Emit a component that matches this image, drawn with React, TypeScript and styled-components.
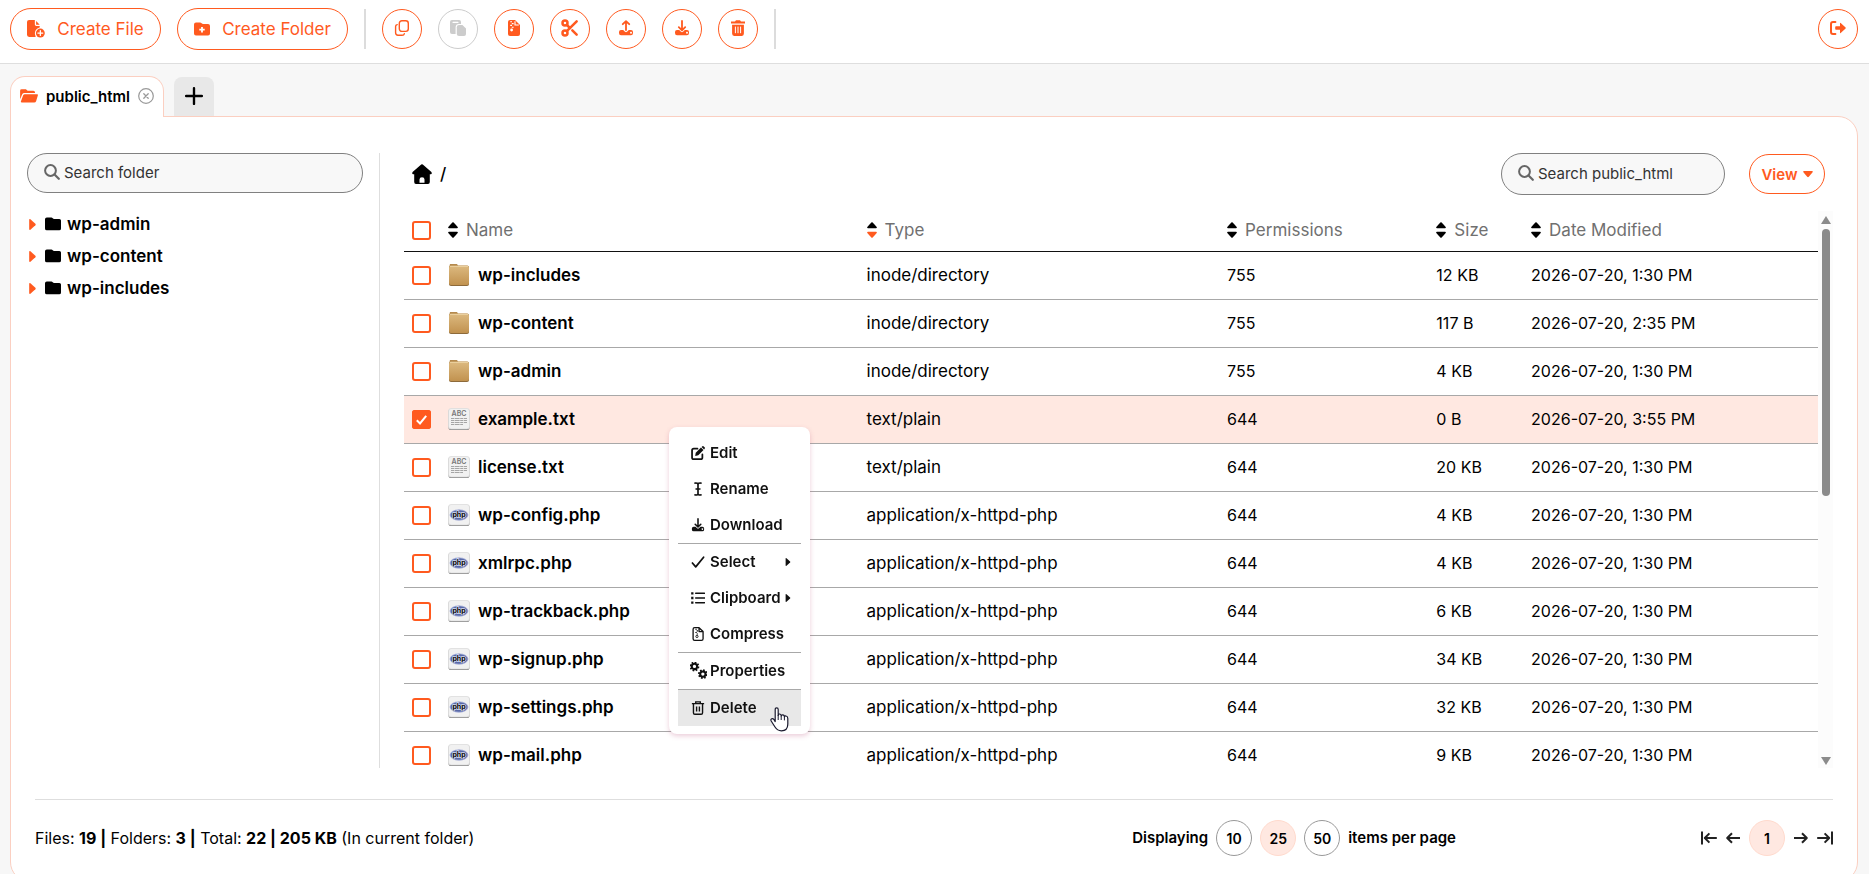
import React, { useState } from "react";
import styled, { createGlobalStyle, css } from "styled-components";
import { Scissors } from "lucide-react";

const accent = "#ff5a1f";
const accentSoft = "#ffe8e1";
const accentLine = "#fbcfc1";

const GlobalStyle = createGlobalStyle`
  *, *::before, *::after { box-sizing: border-box; }
  html, body, #root { height: 100%; }
  body {
    margin: 0;
    overflow: hidden;
    background: #f7f7f7;
    color: #000;
    font-family: Inter, "Liberation Sans", sans-serif;
    font-size: 16px;
  }
  button, input { font-family: inherit; }
  button { cursor: pointer; padding: 0; }
`;

/* ---------- icons ---------- */

const Svg = styled.svg`
  display: block;
  flex: none;
  fill: none;
  stroke: none;
`;

type IconProps = { size?: number };

const icon =
  (children: React.ReactNode, box = "0 0 16 16") =>
  ({ size = 16 }: IconProps) => (
    <Svg width={size} height={size} viewBox={box} aria-hidden="true">
      {children}
    </Svg>
  );

const CreateFileIcon = icon(
  <>
    <path
      fill="currentColor"
      d="M2 0H7.4V4.2Q7.4 5.6 8.8 5.6H12V7.2A5.4 5.4 0 0 0 8.4 15.6Q8 16 7.4 16H2Q0 16 0 14V2Q0 0 2 0ZM8.6 1 12 4.4H8.6Z"
    />
    <circle cx="12.6" cy="12.3" r="4.2" fill="currentColor" />
    <path d="M12.6 10v4.6M10.3 12.3h4.6" stroke="#fff" strokeWidth="1.2" strokeLinecap="round" />
  </>,
  "0 0 17 17",
);

const CreateFolderIcon = icon(
  <>
    <path fill="currentColor" d="M2 1.5H6Q7 1.5 7.6 2.2Q8.2 3 9.2 3H14Q16 3 16 5V12.6Q16 14.6 14 14.6H2Q0 14.6 0 12.6V3.5Q0 1.5 2 1.5Z" />
    <path d="M8 6v5.4M5.3 8.7h5.4" stroke="#fff" strokeWidth="1.8" />
  </>,
);

const CopyIcon = icon(
  <g stroke="currentColor" strokeWidth="1.4" strokeLinecap="round">
    <rect x="5.3" y="0.8" width="9" height="10.6" rx="2.6" />
    <path d="M3.2 4.6Q1.6 4.8 1.6 6.6V12.8Q1.6 15.2 4 15.2H8Q10 15.2 10.3 13.8" />
  </g>,
);

const PasteIcon = icon(
  <>
    <path fill="currentColor" d="M2 0H9Q11 0 11 2V4H9Q5.6 4 5.6 7.4V14H2Q0 14 0 12V2Q0 0 2 0Z" />
    <path d="M3 2.3h5" stroke="#fff" strokeWidth="1.2" strokeLinecap="round" />
    <path fill="currentColor" d="M9 5H12.4L16 8.6V14Q16 16 14 16H9Q6.8 16 6.8 14V7.2Q6.8 5 9 5Z" />
  </>,
);

const ZipIcon = icon(
  <>
    <path fill="currentColor" d="M4 0H9L14 5V14Q14 16 12 16H4Q2 16 2 14V2Q2 0 4 0Z" />
    <path stroke="#fff" strokeWidth="1.1" d="M4.2 1.8h1.8M5.8 3.6h1.8M4.2 5.4h1.8M5.8 7.2h1.8M9 1.2V5H12.8" />
    <circle cx="5.6" cy="10" r="1.4" fill="#fff" />
  </>,
);

const Tray = () => (
  <path
    fill="currentColor"
    fillRule="evenodd"
    d="M3 10H5.2L7 11.8Q8 12.6 9 11.8L10.8 10H13Q15 10 15 12V13Q15 15.2 13 15.2H3Q1 15.2 1 13V12Q1 10 3 10ZM13 11.8a.9.9 0 1 0 .01 0Z"
  />
);

const UploadIcon = icon(
  <>
    <path stroke="currentColor" strokeWidth="1.8" strokeLinecap="round" strokeLinejoin="round" d="M8 10V1.2M4.8 4.2 8 1.1l3.2 3.1" />
    <Tray />
  </>,
);

const DownloadIcon = icon(
  <>
    <path stroke="currentColor" strokeWidth="1.8" strokeLinecap="round" strokeLinejoin="round" d="M8 1v9M4.8 7.2 8 10.3l3.2-3.1" />
    <Tray />
  </>,
);

const TrashIcon = icon(
  <>
    <path fill="currentColor" d="M1 1.6H5L6 .2H10L11 1.6H15V3.4H1ZM2.1 4.8H13.9V13.6Q13.9 16 11.9 16H4.1Q2.1 16 2.1 13.6Z" />
    <path d="M5.4 6.6v6.6M8 6.6v6.6M10.6 6.6v6.6" stroke="#fff" strokeWidth="1" />
  </>,
);

const TrashOutlineIcon = icon(
  <path
    stroke="currentColor"
    strokeWidth="1.6"
    d="M1 3H15M5.4 2.6V1H10.6V2.6M2.8 3.6V13.4Q2.8 15.2 4.4 15.2H11.6Q13.2 15.2 13.2 13.4V3.6M6.4 6.4v5.6M9.6 6.4v5.6"
  />,
);

const LogoutIcon = icon(
  <>
    <path stroke="currentColor" strokeWidth="2" strokeLinecap="round" d="M5.4 2H3Q1 2 1 4V12Q1 14 3 14H5.4" />
    <path fill="currentColor" d="M6 6.2H10V3.2Q10 2.4 10.7 3L15.6 7.5Q16 8 15.6 8.5L10.7 13Q10 13.6 10 12.8V9.8H6Q5.2 9.8 5.2 9V7Q5.2 6.2 6 6.2Z" />
  </>,
);

const OpenFolderIcon = icon(
  <path
    fill="currentColor"
    d="M1.6 1.6H5.6L7.2 3H12.6Q14.2 3 14.2 4.6V5.2H4.2Q2.6 5.2 2 6.6L.1 11V3Q.1 1.6 1.6 1.6ZM4.6 6.3H16.2Q17.2 6.3 16.9 7.3L15.2 12.9Q14.8 14.2 13.4 14.2H1.8Q.4 14.2.9 12.9L3 7.4Q3.4 6.3 4.6 6.3Z"
  />,
  "0 0 17 16",
);

const CloseIcon = icon(
  <g stroke="currentColor" strokeLinecap="round">
    <circle cx="8" cy="8" r="7.3" strokeWidth="1.2" />
    <path strokeWidth="1.3" d="M5.8 5.8l4.4 4.4M10.2 5.8l-4.4 4.4" />
  </g>,
);

const PlusIcon = icon(<path stroke="currentColor" strokeWidth="2.1" strokeLinecap="round" d="M8 1v14M1 8h14" />);

const SearchIcon = icon(
  <g stroke="currentColor" strokeLinecap="round">
    <circle cx="6.5" cy="6.5" r="5.4" strokeWidth="2" />
    <path strokeWidth="2.2" d="M10.8 10.8 14.8 14.8" />
  </g>,
);

const FolderIcon = icon(
  <path fill="currentColor" d="M1.8 1.5H6.4Q7.2 1.5 7.7 2.2Q8.2 3 9.2 3H14.4Q16 3 16 4.6V12.4Q16 14.3 14.2 14.3H1.8Q0 14.3 0 12.4V3.3Q0 1.5 1.8 1.5Z" />,
);

const HomeIcon = icon(
  <path
    fill="currentColor"
    d="M9.2.5Q10 -.1 10.8.5L19.4 8Q20.4 9.8 18.8 10.3H17.8V18Q17.8 20 16 20H12.5V15.5Q12.5 13.2 10 13.2Q7.5 13.2 7.5 15.5V20H4Q2.2 20 2.2 18V10.3H1.2Q-.4 9.8.6 8Z M7 18.8H13V20H7Z"
  />,
  "0 0 20 20",
);

const CaretDown = icon(<path fill="currentColor" d="M1 2H9Q10.4 2.2 9.4 3.5L5.8 7.8Q5 8.6 4.2 7.8L.6 3.5Q-.4 2.2 1 2Z" />, "0 0 10 10");
const CaretRight = icon(<path fill="currentColor" d="M2 .8Q2-.3 3.1.3L7.6 4.4Q8.2 5 7.6 5.6L3.1 9.7Q2 10.3 2 9.2Z" />, "0 0 10 10");

const EditIcon = icon(
  <>
    <path stroke="currentColor" strokeWidth="2" strokeLinecap="round" d="M7.4 3H3.2Q1.2 3 1.2 5V13Q1.2 15 3.2 15H11Q13 15 13 13V9.6" />
    <path fill="currentColor" d="M11.4 1.7 14.3 4.6 8.3 10.6 4.8 11.3 5.4 7.7ZM12.1 1 13 .3Q13.8-.3 14.6.5L15.5 1.4Q16.3 2.2 15.6 3L15 3.9Z" />
  </>,
);

const RenameIcon = icon(
  <path stroke="currentColor" strokeWidth="1.9" strokeLinecap="round" d="M4.6 1.2Q8 .8 8 3V13Q8 15.2 4.6 14.8M11.4 1.2Q8 .8 8 3M8 13Q8 15.2 11.4 14.8M5.8 8H10.2" />,
);

const CheckIcon = icon(<path stroke="currentColor" strokeWidth="2" strokeLinecap="round" strokeLinejoin="round" d="M1.6 9.2 5.4 13.6 14.4 2.6" />);

const ListIcon = icon(
  <>
    <path stroke="currentColor" strokeWidth="1.8" strokeLinecap="round" d="M5.4 2.6h10M5.4 8h10M5.4 13.4h10" />
    <path fill="currentColor" d="M.2 1.3h2.6v2.6H.2ZM.2 6.7h2.6v2.6H.2ZM.2 12.1h2.6v2.6H.2Z" />
  </>,
);

const CompressIcon = icon(
  <>
    <path stroke="currentColor" strokeWidth="1.5" strokeLinejoin="round" d="M4.2.8H9.2L13.8 5.2V13.4Q13.8 15.2 12 15.2H4.2Q2.4 15.2 2.4 13.4V2.6Q2.4.8 4.2.8ZM9.2.8V5.2H13.8" />
    <path stroke="currentColor" strokeWidth="1.2" d="M5 2.6h1.6M6.4 4.4H8M5 6.2h1.6M6.4 8H8" />
    <circle cx="6.8" cy="10.8" r="1.3" stroke="currentColor" strokeWidth="1" />
  </>,
);

const Gear = ({ x, y }: { x: number; y: number }) => (
  <g stroke="currentColor">
    <circle cx={x} cy={y} r="2.5" strokeWidth="1.9" />
    {[0, 45, 90, 135].map((a) => (
      <path
        key={a}
        strokeWidth="1.7"
        d={`M${x - 4.6} ${y}h1.8M${x + 2.8} ${y}h1.8`}
        transform={`rotate(${a + 15} ${x} ${y})`}
      />
    ))}
  </g>
);

const GearsIcon = icon(
  <>
    <Gear x={3.7} y={4.2} />
    <Gear x={11.6} y={11.4} />
  </>,
  "0 0 15 16",
);

const FirstIcon = icon(<path stroke="currentColor" strokeWidth="2" strokeLinejoin="round" d="M1 1.6v12.8M15.8 8H4M8.4 3.4 3.8 8l4.6 4.6" />);
const PrevIcon = icon(<path stroke="currentColor" strokeWidth="2" strokeLinejoin="round" d="M15 8H2.2M7 3.2 2.2 8 7 12.8" />);
const NextIcon = icon(<path stroke="currentColor" strokeWidth="2" strokeLinejoin="round" d="M1 8h12.8M9 3.2 13.8 8 9 12.8" />);
const LastIcon = icon(<path stroke="currentColor" strokeWidth="2" strokeLinejoin="round" d="M15 1.6v12.8M.2 8H12M7.6 3.4 12.2 8l-4.6 4.6" />);

const SortMark = ({ active }: { active?: boolean }) => (
  <Svg width="10" height="16" viewBox="0 0 10 16" aria-hidden="true">
    <path fill="currentColor" d="M4.3.5Q5-.1 5.7.5L9.7 5Q10.2 6 9 6.2H1Q-.2 6 .3 5Z" />
    <path fill={active ? accent : "currentColor"} d="M4.3 15.5Q5 16.1 5.7 15.5L9.7 11Q10.2 10 9 9.8H1Q-.2 10 .3 11Z" />
  </Svg>
);

const DirectoryThumb = () => (
  <Svg width="22" height="22" viewBox="0 0 22 22" aria-hidden="true">
    <defs>
      <linearGradient id="dir" x1="0" y1="0" x2="0" y2="1">
        <stop offset="0" stopColor="#dcb97f" />
        <stop offset="1" stopColor="#c1924f" />
      </linearGradient>
    </defs>
    <path fill="#b58a4e" d="M2 0H9L10 1.4H19.5Q20.6 1.4 20.8 3H1.2Z" />
    <rect x="1" y="2" width="20" height="20" rx="2" fill="#8d6a3a" />
    <rect x="1" y="1.8" width="20" height="19.2" rx="2" fill="url(#dir)" />
    <path d="M2 2.4H20" stroke="#ecd2a2" strokeWidth="1" />
  </Svg>
);

const Sheet = ({ children }: { children: React.ReactNode }) => (
  <Svg width="22" height="22" viewBox="0 0 22 22" aria-hidden="true">
    <rect x="0.5" y="1" width="21" height="21" rx="2.5" fill="#777" />
    <rect x="0.5" y="0.5" width="21" height="20.5" rx="2.5" fill="#f1f1f1" stroke="#dcdcdc" strokeWidth="0.8" />
    {children}
  </Svg>
);

const TextThumb = () => (
  <Sheet>
    <text x="11" y="8" textAnchor="middle" fontSize="7" fill="#777">
      ABC
    </text>
    <path d="M3 10.5h16M3 12.5h16M3 14.5h16M3 16.5h12" stroke="#a5a5a5" strokeWidth="1" strokeDasharray="3 .6 5 .6" />
  </Sheet>
);

const PhpThumb = () => (
  <Sheet>
    <ellipse cx="11" cy="11" rx="9" ry="5.2" fill="#5869a8" stroke="#a9b3dc" strokeWidth="0.8" />
    <text x="11" y="13" textAnchor="middle" fontSize="7" fontWeight="700" fill="#000" stroke="#d9def2" strokeWidth="1.4" paintOrder="stroke">
      php
    </text>
  </Sheet>
);

const HandPointer = styled.svg`
  position: fixed;
  left: 770px;
  top: 707px;
  z-index: 20;
  pointer-events: none;
`;

/* ---------- layout ---------- */

const Page = styled.div`
  display: flex;
  flex-direction: column;
  height: 100%;
`;

const Toolbar = styled.header`
  display: flex;
  align-items: center;
  gap: 16px;
  flex: none;
  height: 64px;
  padding: 0 11px 6px 10px;
  background: #fff;
  border-bottom: 1px solid #dedede;
`;

const pill = css`
  display: flex;
  align-items: center;
  justify-content: center;
  border: 1px solid ${accent};
  background: #fff;
  color: ${accent};
`;

const CreateButton = styled.button<{ $wide?: boolean }>`
  ${pill}
  gap: 12px;
  width: ${(p) => (p.$wide ? 171 : 151)}px;
  height: 42px;
  border-radius: 21px;
  font-size: 17px;
  font-weight: 400;
`;

const RoundButton = styled.button`
  ${pill}
  width: 40px;
  height: 40px;
  padding-bottom: 2px;
  border-radius: 50%;

  &:disabled {
    border-color: #ccc;
    color: #ccc;
  }
`;

const ToolDivider = styled.span`
  width: 2px;
  height: 40px;
  background: #dcdcdc;
`;

const Spacer = styled.span`
  flex: 1;
`;

const TabBar = styled.nav`
  display: flex;
  align-items: flex-end;
  flex: none;
  gap: 10px;
  padding: 12px 10px 0;
`;

const Tab = styled.div`
  position: relative;
  z-index: 1;
  display: flex;
  align-items: center;
  gap: 8px;
  height: 41px;
  margin-bottom: -1px;
  padding: 0 9px 2px;
  border: 1px solid ${accentLine};
  border-bottom: 0;
  border-radius: 15px 15px 0 0;
  background: #fff;
  color: ${accent};
`;

const TabLabel = styled.span`
  color: #000;
  font-size: 15px;
  font-weight: 600;
`;

const TabClose = styled.button`
  border: 0;
  background: none;
  color: #999;
`;

const AddTab = styled.button`
  display: flex;
  align-items: center;
  justify-content: center;
  width: 40px;
  height: 39px;
  padding-bottom: 2px;
  border: 0;
  border-radius: 8px 8px 0 0;
  background: #e8e8e8;
`;

const Panel = styled.main`
  display: flex;
  flex-direction: column;
  flex: 1;
  min-height: 0;
  margin: 0 11px -8px 10px;
  padding-top: 36px;
  border: 1px solid ${accentLine};
  border-radius: 0 20px 20px 20px;
  background: #fff;
`;

const Columns = styled.div`
  display: flex;
  flex: 1;
  min-height: 0;
`;

const Sidebar = styled.aside`
  flex: none;
  width: 369px;
  padding: 0 16px;
  border-right: 1px solid #dedede;
`;

const SearchBox = styled.label<{ $tall?: boolean }>`
  display: flex;
  align-items: center;
  gap: 4px;
  height: ${(p) => (p.$tall ? 42 : 40)}px;
  padding: 0 16px 2px;
  border: 1px solid #808080;
  border-radius: 21px;
  background: #f8f8f8;
  color: #666;
`;

const SearchInput = styled.input`
  flex: 1;
  min-width: 0;
  padding: 0;
  border: 0;
  outline: 0;
  background: none;
  font-size: 15px;

  &::placeholder {
    color: #333;
    opacity: 1;
  }
`;

const Tree = styled.ul`
  margin: 15px 0 0;
  padding: 0;
  list-style: none;
`;

const TreeItem = styled.li`
  display: flex;
  align-items: center;
  height: 32px;
`;

const TreeToggle = styled.button`
  width: 18px;
  border: 0;
  background: none;
  color: ${accent};
`;

const TreeLink = styled.a`
  display: flex;
  align-items: center;
  gap: 6px;
  color: #000;
  font-size: 17px;
  font-weight: 600;
  text-decoration: none;
`;

const Browser = styled.section`
  display: flex;
  flex-direction: column;
  flex: 1;
  min-width: 0;
  padding: 0 24px;
`;

const PathBar = styled.div`
  display: flex;
  align-items: center;
  flex: none;
  height: 42px;
  padding: 0 8px;
`;

const Crumb = styled.a`
  display: flex;
  align-items: center;
  gap: 8px;
  color: #000;
  font-size: 17px;
  font-weight: 500;
  text-decoration: none;
`;

const FileSearch = styled.div`
  width: 224px;
  margin-right: 24px;
`;

const ViewButton = styled.button`
  ${pill}
  gap: 5px;
  width: 76px;
  height: 40px;
  border-radius: 20px;
  font-size: 15px;
  font-weight: 600;
`;

const ListArea = styled.div`
  display: flex;
  flex: 1;
  min-height: 0;
  margin-top: 16px;
`;

const ListClip = styled.div`
  flex: 1;
  min-width: 0;
  overflow: hidden;
`;

const Table = styled.table`
  width: 100%;
  table-layout: fixed;
  border-collapse: separate;
  border-spacing: 0;
`;

const Col = styled.col<{ $w?: string }>`
  width: ${(p) => p.$w ?? "auto"};
`;

const HeadCell = styled.th`
  height: 41px;
  padding: 0;
  padding-bottom: 2px;
  border-bottom: 1px solid #111;
  text-align: left;
  font-weight: 400;
`;

const SortButton = styled.button`
  display: flex;
  align-items: center;
  gap: 8px;
  border: 0;
  background: none;
  color: #000;
`;

const SortLabel = styled.span`
  color: #707070;
  font-size: 17px;
`;

const Row = styled.tr<{ $on: boolean }>`
  background: ${(p) => (p.$on ? accentSoft : "#fff")};
`;

const Cell = styled.td<{ $wide?: boolean }>`
  height: 48px;
  padding: 0 0 1px;
  border-bottom: 1px solid #a8a8a8;
  font-size: ${(p) => (p.$wide ? 17 : 16)}px;
  white-space: nowrap;
`;

const NameWrap = styled.div`
  display: flex;
  align-items: center;
  gap: 8px;
  font-weight: 600;
`;

const Tick = styled.input`
  display: block;
  appearance: none;
  width: 19px;
  height: 19px;
  margin: 0 0 0 8px;
  border: 2px solid ${accent};
  border-radius: 3px;
  background: #fff;
`;

const TickWrap = styled.label`
  display: grid;
  width: 44px;

  > * {
    grid-area: 1 / 1;
  }
`;

const TickMark = styled.svg`
  width: 19px;
  height: 19px;
  margin-left: 8px;
  pointer-events: none;
`;

const ScrollTrack = styled.div`
  display: flex;
  flex-direction: column;
  align-items: center;
  flex: none;
  width: 15px;
  padding: 5px 0 3px;
  background: #fcfcfc;
`;

const ScrollArrow = styled.span<{ $down?: boolean }>`
  width: 0;
  height: 0;
  border: 5px solid transparent;
  ${(p) => (p.$down ? "border-top: 8px solid #8b8b8b; border-bottom: 0;" : "border-bottom: 8px solid #8b8b8b; border-top: 0;")}
`;

const ScrollLane = styled.div`
  flex: 1;
  width: 8px;
  margin: 5px 0;
`;

const ScrollThumb = styled.div`
  height: 51%;
  border-radius: 4px;
  background: #8b8b8b;
`;

const Footer = styled.footer`
  display: flex;
  align-items: flex-start;
  flex: none;
  height: 82px;
  margin: 31px 24px 0;
  padding-top: 20px;
  border-top: 1px solid #dedede;
  line-height: 36px;
`;

const Summary = styled.p`
  margin: 0;
  font-size: 16px;
`;

const PageSize = styled.div`
  display: flex;
  align-items: center;
  gap: 8px;
  font-size: 15px;
  font-weight: 600;
`;

const Pager = styled.nav`
  display: flex;
  align-items: center;
  gap: 8px;
  margin-left: 245px;
`;

const Bubble = styled.button<{ $on?: boolean }>`
  width: 36px;
  height: 36px;
  border: 1px solid ${(p) => (p.$on ? "#ffdacd" : "#999")};
  border-radius: 50%;
  background: ${(p) => (p.$on ? accentSoft : "#fff")};
  color: #000;
  font-size: 14px;
  font-weight: 600;
`;

const PagerArrow = styled.button`
  border: 0;
  background: none;
  color: #222;
`;

const Menu = styled.div`
  position: fixed;
  left: 669px;
  top: 427px;
  z-index: 10;
  width: 141px;
  padding: 8px 9px;
  border-radius: 8px;
  background: #fff;
  box-shadow: 0 2px 5px rgba(190, 90, 130, 0.3);
`;

const MenuItem = styled.button<{ $line?: boolean; $hover?: boolean }>`
  display: flex;
  align-items: center;
  gap: 4px;
  width: 100%;
  height: ${(p) => (p.$line ? 37 : 36)}px;
  padding: 0 0 1px 12px;
  border: 0;
  border-top: ${(p) => (p.$line ? "1px solid #a8a8a8" : "0")};
  background: ${(p) => (p.$hover ? "#e8e8e8" : "none")};
  color: #111;
  font-size: 15px;
  font-weight: 600;
`;

const MenuGlyph = styled.span`
  display: flex;
  justify-content: center;
  flex: none;
  width: 16px;
`;

const MenuLabel = styled.span<{ $sub?: boolean }>`
  width: ${(p) => (p.$sub ? "70px" : "auto")};
  text-align: left;
`;

/* ---------- data ---------- */

type Entry = { name: string; kind: "dir" | "txt" | "php"; perm: string; size: string; date: string };

const entries: Entry[] = [
  { name: "wp-includes", kind: "dir", perm: "755", size: "12 KB", date: "2026-07-20, 1:30 PM" },
  { name: "wp-content", kind: "dir", perm: "755", size: "117 B", date: "2026-07-20, 2:35 PM" },
  { name: "wp-admin", kind: "dir", perm: "755", size: "4 KB", date: "2026-07-20, 1:30 PM" },
  { name: "example.txt", kind: "txt", perm: "644", size: "0 B", date: "2026-07-20, 3:55 PM" },
  { name: "license.txt", kind: "txt", perm: "644", size: "20 KB", date: "2026-07-20, 1:30 PM" },
  { name: "wp-config.php", kind: "php", perm: "644", size: "4 KB", date: "2026-07-20, 1:30 PM" },
  { name: "xmlrpc.php", kind: "php", perm: "644", size: "4 KB", date: "2026-07-20, 1:30 PM" },
  { name: "wp-trackback.php", kind: "php", perm: "644", size: "6 KB", date: "2026-07-20, 1:30 PM" },
  { name: "wp-signup.php", kind: "php", perm: "644", size: "34 KB", date: "2026-07-20, 1:30 PM" },
  { name: "wp-settings.php", kind: "php", perm: "644", size: "32 KB", date: "2026-07-20, 1:30 PM" },
  { name: "wp-mail.php", kind: "php", perm: "644", size: "9 KB", date: "2026-07-20, 1:30 PM" },
];

const kinds = {
  dir: { mime: "inode/directory", Thumb: DirectoryThumb },
  txt: { mime: "text/plain", Thumb: TextThumb },
  php: { mime: "application/x-httpd-php", Thumb: PhpThumb },
};

const tools = [
  { label: "Copy", node: <CopyIcon /> },
  { label: "Paste", node: <PasteIcon />, disabled: true },
  { label: "Compress", node: <ZipIcon /> },
  { label: "Cut", node: <Scissors size={20} strokeWidth={3} /> },
  { label: "Upload", node: <UploadIcon /> },
  { label: "Download", node: <DownloadIcon /> },
  { label: "Delete", node: <TrashIcon /> },
];

const columns = ["Name", "Type", "Permissions", "Size", "Date Modified"];

const menu = [
  { label: "Edit", Icon: EditIcon },
  { label: "Rename", Icon: RenameIcon },
  { label: "Download", Icon: DownloadIcon },
  { label: "Select", Icon: CheckIcon, line: true, sub: true },
  { label: "Clipboard", Icon: ListIcon, sub: true },
  { label: "Compress", Icon: CompressIcon },
  { label: "Properties", Icon: GearsIcon, line: true, glyph: 17 },
  { label: "Delete", Icon: TrashOutlineIcon, line: true, hover: true },
];

const RowTick = ({ label, checked, onChange }: { label: string; checked: boolean; onChange: () => void }) => (
  <TickWrap>
    <Tick type="checkbox" aria-label={label} checked={checked} onChange={onChange} />
    {checked && (
      <TickMark viewBox="0 0 19 19" aria-hidden="true">
        <rect width="19" height="19" rx="3" fill={accent} />
        <path d="M4.8 10.2 8 13.4 14.2 5.8" fill="none" stroke="#fff" strokeWidth="2" />
      </TickMark>
    )}
  </TickWrap>
);

export default function App() {
  const [selected, setSelected] = useState<string[]>(["example.txt"]);
  const [pageSize, setPageSize] = useState(25);

  const toggle = (name: string) =>
    setSelected((s) => (s.includes(name) ? s.filter((n) => n !== name) : [...s, name]));
  const all = selected.length === entries.length;

  return (
    <Page>
      <GlobalStyle />
      <Toolbar>
        <CreateButton>
          <CreateFileIcon size={18} />
          Create File
        </CreateButton>
        <CreateButton $wide>
          <CreateFolderIcon />
          Create Folder
        </CreateButton>
        <ToolDivider />
        {tools.map((t) => (
          <RoundButton key={t.label} aria-label={t.label} disabled={t.disabled}>
            {t.node}
          </RoundButton>
        ))}
        <ToolDivider />
        <Spacer />
        <RoundButton aria-label="Log out">
          <LogoutIcon />
        </RoundButton>
      </Toolbar>

      <TabBar>
        <Tab>
          <OpenFolderIcon size={18} />
          <TabLabel>public_html</TabLabel>
          <TabClose aria-label="Close tab">
            <CloseIcon />
          </TabClose>
        </Tab>
        <AddTab aria-label="New tab">
          <PlusIcon size={18} />
        </AddTab>
      </TabBar>

      <Panel>
        <Columns>
          <Sidebar>
            <SearchBox>
              <SearchIcon />
              <SearchInput aria-label="Search folder" placeholder="Search folder" />
            </SearchBox>
            <Tree>
              {["wp-admin", "wp-content", "wp-includes"].map((name) => (
                <TreeItem key={name}>
                  <TreeToggle aria-label={`Expand ${name}`}>
                    <CaretRight size={11} />
                  </TreeToggle>
                  <TreeLink href="#">
                    <FolderIcon />
                    {name}
                  </TreeLink>
                </TreeItem>
              ))}
            </Tree>
          </Sidebar>

          <Browser>
            <PathBar>
              <Crumb href="#">
                <HomeIcon size={20} />/
              </Crumb>
              <Spacer />
              <FileSearch>
                <SearchBox $tall>
                  <SearchIcon />
                  <SearchInput aria-label="Search public_html" placeholder="Search public_html" />
                </SearchBox>
              </FileSearch>
              <ViewButton>
                View
                <CaretDown size={10} />
              </ViewButton>
            </PathBar>

            <ListArea>
              <ListClip>
                <Table>
                  <colgroup>
                    <Col $w="44px" />
                    <Col $w="29.6%" />
                    <Col $w="25.5%" />
                    <Col $w="14.8%" />
                    <Col $w="6.7%" />
                    <Col />
                  </colgroup>
                  <thead>
                    <tr>
                      <HeadCell>
                        <RowTick
                          label="Select all"
                          checked={all}
                          onChange={() => setSelected(all ? [] : entries.map((e) => e.name))}
                        />
                      </HeadCell>
                      {columns.map((c) => (
                        <HeadCell key={c}>
                          <SortButton>
                            <SortMark active={c === "Type"} />
                            <SortLabel>{c}</SortLabel>
                          </SortButton>
                        </HeadCell>
                      ))}
                    </tr>
                  </thead>
                  <tbody>
                    {entries.map((e) => {
                      const { mime, Thumb } = kinds[e.kind];
                      const on = selected.includes(e.name);
                      return (
                        <Row key={e.name} $on={on}>
                          <Cell>
                            <RowTick label={`Select ${e.name}`} checked={on} onChange={() => toggle(e.name)} />
                          </Cell>
                          <Cell $wide>
                            <NameWrap>
                              <Thumb />
                              {e.name}
                            </NameWrap>
                          </Cell>
                          <Cell $wide>{mime}</Cell>
                          <Cell>{e.perm}</Cell>
                          <Cell>{e.size}</Cell>
                          <Cell>{e.date}</Cell>
                        </Row>
                      );
                    })}
                  </tbody>
                </Table>
              </ListClip>
              <ScrollTrack>
                <ScrollArrow />
                <ScrollLane>
                  <ScrollThumb />
                </ScrollLane>
                <ScrollArrow $down />
              </ScrollTrack>
            </ListArea>
          </Browser>
        </Columns>

        <Footer>
          <Summary>
            Files: <b>19 |</b> Folders: <b>3 |</b> Total: <b>22 | 205 KB</b> (In current folder)
          </Summary>
          <Spacer />
          <PageSize>
            Displaying
            {[10, 25, 50].map((n) => (
              <Bubble key={n} $on={n === pageSize} onClick={() => setPageSize(n)}>
                {n}
              </Bubble>
            ))}
            items per page
          </PageSize>
          <Pager aria-label="Pages">
            <PagerArrow aria-label="First page"><FirstIcon /></PagerArrow>
            <PagerArrow aria-label="Previous page"><PrevIcon /></PagerArrow>
            <Bubble $on>1</Bubble>
            <PagerArrow aria-label="Next page"><NextIcon /></PagerArrow>
            <PagerArrow aria-label="Last page"><LastIcon /></PagerArrow>
          </Pager>
        </Footer>
      </Panel>

      <Menu role="menu">
        {menu.map(({ label, Icon, line, sub, hover, glyph }) => (
          <MenuItem key={label} role="menuitem" $line={line} $hover={hover}>
            <MenuGlyph>
              <Icon size={glyph ?? 14} />
            </MenuGlyph>
            <MenuLabel $sub={sub}>{label}</MenuLabel>
            {sub && <CaretRight size={8} />}
          </MenuItem>
        ))}
      </Menu>
      <HandPointer width="19" height="25" viewBox="0 0 19 25" aria-hidden="true">
        <path
          fill="#fff"
          stroke="#1a1a2e"
          strokeWidth="1.2"
          strokeLinejoin="round"
          d="M5.2 14.6V2.6Q5.2.8 6.7.8Q8.2.8 8.2 2.6V8.4Q8.4 6.8 9.8 7Q11.2 7.2 11.2 9Q11.6 7.6 13 7.9Q14.4 8.2 14.4 9.8Q14.8 8.8 16 9Q17.8 9.3 17.8 11.4V17Q17.8 23.8 11.4 23.8Q7.4 23.8 5 20L1.2 14Q.4 12.4 1.7 11.7Q3 11.2 4 12.6Z"
        />
        <path stroke="#1a1a2e" strokeWidth="1" d="M8.2 8v5M11.2 9v4M14.4 10v3.4" />
      </HandPointer>
    </Page>
  );
}
